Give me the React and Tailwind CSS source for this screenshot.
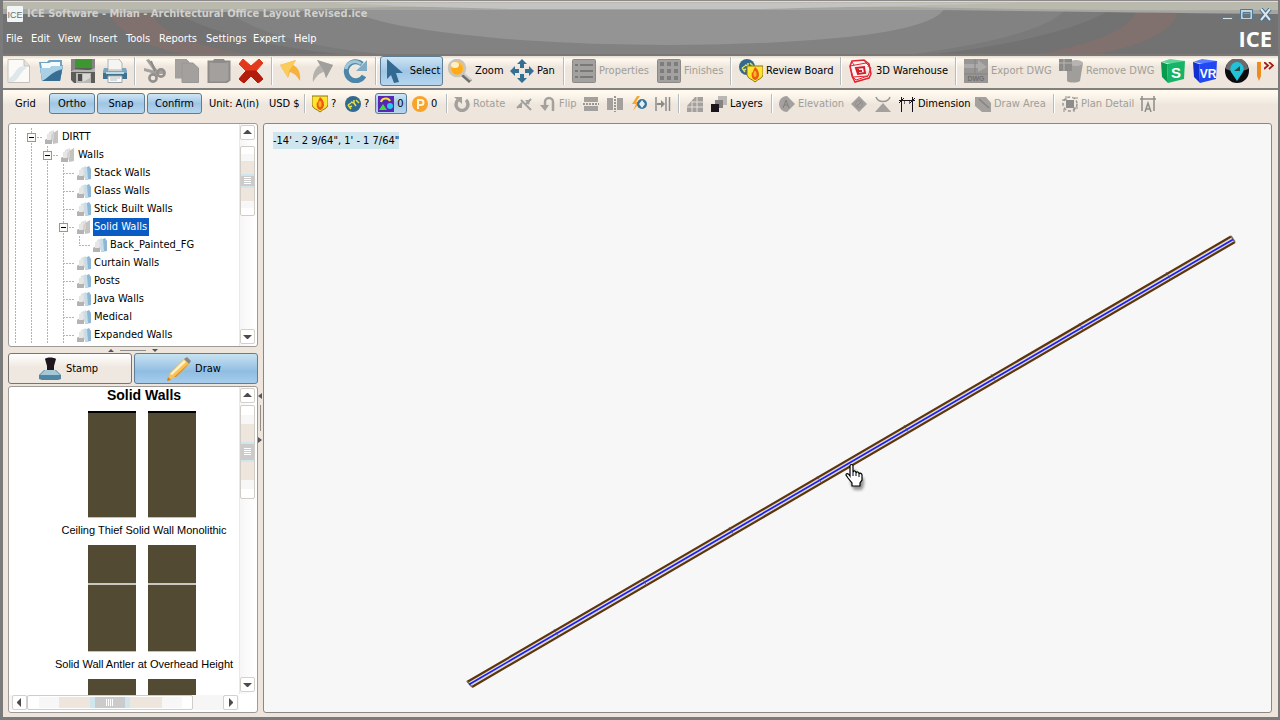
import React from "react";

const GRAY = "#a3a09d";

function Svg({ w = 24, h = 24, box, children }) {
  return (
    <svg width={w} height={h} viewBox={box || `0 0 ${w} ${h}`} className="block shrink-0" aria-hidden="true">
      {children}
    </svg>
  );
}

/* ---------- main toolbar icons (24px) ---------- */
const NewIcon = () => (
  <Svg>
    <path d="M1 .5H17L22.5 7V23.5H1Z" fill="#fbfaf7" stroke="#c5c1ba" />
    <path d="M17 .5V7H22.5" fill="#e5e2de" stroke="#c5c1ba" />
    <path d="M2 19C8 17 8 9 15 7L20 9C13 12 13 20 6 23H2Z" fill="#dfe7ea" />
  </Svg>
);
const OpenIcon = () => (
  <Svg>
    <path d="M0 3H8L10 1H23V6H24L21 22H3Z" fill="#6fa3c4" />
    <path d="M2 4H10L12 3H21V10H3Z" fill="#f4fbfd" />
    <path d="M1 8 3 22H21L24 7H13L11 9H1Z" fill="#5b92b8" />
    <path d="M1 8 3 22C8 21 10 14 23 10L24 7H13L11 9H1Z" fill="#a9d0e4" />
    <path d="M3 22H21L23 11C13 12 10 19 3 22Z" fill="#386e93" />
  </Svg>
);
const SaveIcon = () => (
  <Svg>
    <path d="M0 0H24V24H3L0 21Z" fill="#5c5c5a" />
    <path d="M0 0H4V11H0ZM21 0H24V11H21Z" fill="#848482" />
    <path d="M4 0H21V9H4Z" fill="#3d9631" />
    <path d="M0 12C7 8 15 14 24 9V13H0Z" fill="#b5b4b1" />
    <path d="M5 14H20V24H5Z" fill="#b9b8b5" />
    <path d="M7 15H11V22H7Z" fill="#4e4e4d" />
    <path d="M12 15H19V19L12 23Z" fill="#dad8d4" />
  </Svg>
);
const PrintIcon = () => (
  <Svg>
    <path d="M5 0H16L19 4V11H5Z" fill="#f5f5f3" stroke="#adb4b6" />
    <path d="M1 9H5V12H19V9H23L24 12V20H0V12Z" fill="#7ca6bf" />
    <path d="M0 14H24V20H0Z" fill="#40718f" />
    <path d="M3 13H21V15H3Z" fill="#c0dbe6" />
    <path d="M5 17H19V23.5H5Z" fill="#fbfaf7" stroke="#9aa6ac" />
    <path d="M7 19H17M7 21H14" stroke="#b7bdbd" />
  </Svg>
);
const CutIcon = () => (
  <Svg>
    <path d="M6 0 15 12 13 15 3 1ZM1 9 13 12 21 12 22 15 12 15 1 12Z" fill={GRAY} />
    <path d="M8 2C10 7 11 9 12 12" stroke="#8b8987" strokeWidth="2" fill="none" />
    <circle cx="18" cy="14" r="3.6" fill="none" stroke="#93908e" strokeWidth="2.6" />
    <circle cx="10" cy="19" r="3.6" fill="none" stroke="#93908e" strokeWidth="2.6" />
  </Svg>
);
const CopyIcon = () => (
  <Svg>
    <path d="M0 0H11L14 3V19H0Z" fill={GRAY} stroke="#a09e9c" />
    <path d="M7 4H18L23.500 9V23.500H7Z" fill={GRAY} stroke="#9a9896" />
  </Svg>
);
const PasteIcon = () => (
  <Svg>
    <path d="M1.500 2.500H22.500V21L19 23.500H1.500Z" fill={GRAY} stroke="#8e8c8a" strokeWidth="2" />
    <path d="M7 0H17L19 4H5Z" fill="#8e8c8a" />
  </Svg>
);
const DeleteIcon = () => (
  <Svg>
    <path d="M4 0 12 7 20 0 24 4 17 12 24 20 19 24 12 17 5 24 0 20 7 12 0 5Z" fill="#e2381b" stroke="#e2381b" />
    <path d="M7 12H17L24 20 19 24 12 17 5 24 0 20Z" fill="#b21c0c" stroke="#b21c0c" />
  </Svg>
);
const UndoIcon = () => (
  <Svg>
    <path d="M1 6 17 1 14 6C20 9 22 15 21 22C18 17 15 14 11 13L9 19Z" fill="#f6b23c" />
    <path d="M1 6 17 1 14 6 10 12 9 19Z" fill="#fbcb5c" />
  </Svg>
);
const RedoIcon = () => (
  <Svg>
    <path d="M22 6 6 1 9 6C4 9 1 16 2 23C5 18 8 14 13 13L15 19Z" fill="#b5b2ae" />
    <path d="M22 6 6 1 9 6 13 12 15 19Z" fill="#a19f9c" />
  </Svg>
);
const RefreshIcon = () => (
  <Svg>
    <path d="M19 5A9.500 9.500 0 1 0 21 17" fill="none" stroke="#4b86a8" strokeWidth="5" />
    <path d="M18 5A9 9 0 0 0 3 10" fill="none" stroke="#a3c6d8" strokeWidth="3" />
    <path d="M24 1V12H13Z" fill="#7fadc5" />
  </Svg>
);
const SelectIcon = () => (
  <Svg>
    <path d="M4 0 20 14H13L16 23 11 24 8 16 4 20Z" fill="#336a91" />
  </Svg>
);
const ZoomIcon = () => (
  <Svg>
    <path d="M15 14 24 21 21 24 13 17Z" fill="#6f706f" />
    <path d="M15 14 23 21" stroke="#c9c9c6" strokeWidth="2" />
    <circle cx="9" cy="9" r="8" fill="#f9bd45" stroke="#c8c5bd" strokeWidth="2.500" />
    <circle cx="9" cy="10" r="5.500" fill="#ffab18" />
    <ellipse cx="7" cy="6" rx="4" ry="3" fill="#fff0c4" />
  </Svg>
);
const PanIcon = () => (
  <Svg>
    <path d="M12 0 17 5H14V9H10V5H7ZM12 24 17 19H14V15H10V19H7ZM0 12 5 7V10H9V14H5V17ZM24 12 19 7V10H15V14H19V17Z" fill="#356f94" />
  </Svg>
);
const PropertiesIcon = () => (
  <Svg>
    <rect x=".5" y=".5" width="23" height="23" rx="1" fill="#a3a1a0" stroke="#8c8a88" />
    <path d="M3 6H6M3 12H6M3 18H6M8 6H21M8 12H21M8 18H21" stroke="#7b7978" strokeWidth="2" />
  </Svg>
);
const FinishesIcon = () => (
  <Svg>
    <rect x=".5" y=".5" width="23" height="23" rx="1" fill="#a3a1a0" stroke="#8c8a88" />
    <path d="M3 5H7M10 5H14M17 5H21M3 12H7M10 12H14M17 12H21M3 19H7M10 19H14M17 19H21" stroke="#7f7d7b" strokeWidth="4" />
  </Svg>
);
const Shield = () => (
  <>
    <path d="M0 1H16V10C15 14 11 14 8 17C5 14 1 14 0 10Z" fill="#ffe52b" stroke="#8a7520" />
    <path d="M8 2C11 4 12 7 12 10C12 13 9 15 8 15C5 14 4 11 5 7C6 9 6 5 8 2Z" fill="#ee5a16" />
    <ellipse cx="8" cy="9" rx="1.500" ry="3" fill="#ffb620" />
  </>
);
const Fyi = () => (
  <>
    <circle cx="8" cy="8" r="8" fill="#32698e" />
    <path d="M3 9 6 13M3 9 6 7M5 11 7 10M6 6 9 7 9 4M9 7 11 10M11 4 14 7" stroke="#e5df45" strokeWidth="1.500" fill="none" />
  </>
);
const ReviewIcon = () => (
  <Svg>
    <Fyi />
    <g transform="translate(8 6)"><Shield /></g>
  </Svg>
);
const WarehouseIcon = () => (
  <Svg>
    <path d="M2 5 16 2 22 10 15 13 19 21 7 23 1 15Z" fill="#fff4f3" />
    <path d="M3 2 15 1 20 5 22 15 20 19 6 23 3 17 1 7Z" fill="none" stroke="#e22530" strokeWidth="1.500" />
    <path d="M1 7 17 4 22 9 19 17 4 18ZM3 3 5 6M15 1 17 4M20 5 19 8M4 18 7 21 19 17" fill="none" stroke="#e22530" />
    <path d="M7 9 15 8 16 14 9 15ZM9 12H13M9 8V16" stroke="#d51e29" strokeWidth="2" fill="none" />
  </Svg>
);
const ExportIcon = () => (
  <Svg>
    <rect width="24" height="24" fill="#989694" />
    <path d="M0 5H14V1L23 8 14 13V9H0Z" fill="#adaba9" />
    <path d="M11 0V15M0 15H24" stroke="#858381" />
    <text x="12" y="22" textAnchor="middle" fontSize="7" fontWeight="700" fontFamily="Liberation Sans, sans-serif" fill="#72706e">DWG</text>
  </Svg>
);
const RemoveIcon = () => (
  <Svg>
    <path d="M8 4H24L21 22C18 24 10 24 8 22Z" fill="#a09e9b" />
    <ellipse cx="17" cy="4" rx="7" ry="3" fill="#b6b4b1" />
    <path d="M0 0H13V12H0Z" fill="#8d8b89" />
    <path d="M0 4H13M5 0V12" stroke="#b9b6b2" />
  </Svg>
);
const Cube = ({ label, top, left, front, size }) => (
  <Svg>
    <path d="M0 3 9 0 24 2 17 6Z" fill={top} />
    <path d="M0 3 6 5 7 24 1 18Z" fill={left} />
    <path d="M6 5 24 2 23 20 7 24Z" fill={front} />
    <text x="15" y="19" textAnchor="middle" fontSize={size} fontWeight="700" fontFamily="Liberation Sans, sans-serif" fill="#fff">{label}</text>
  </Svg>
);
const PinIcon = () => (
  <Svg>
    <circle cx="12" cy="12" r="12" fill="#0c0c0e" />
    <path d="M1 10A11 11 0 0 1 23 10C17 13 7 13 1 10Z" fill="#6b6b6e" />
    <path d="M12 3A7 7 0 0 1 18 13L12 22 6 13A7 7 0 0 1 12 3Z" fill="#20c4d8" />
    <path d="M15 7V12H9Z" fill="#31474c" />
  </Svg>
);
const PencilEdgeIcon = () => (
  <Svg w={4} h={20}>
    <path d="M0 1H4V15L2 20 0 15Z" fill="#ef8a1c" />
  </Svg>
);

/* ---------- second toolbar icons (16px) ---------- */
const S = ({ children, h = 16 }) => <Svg w={16} h={h}>{children}</Svg>;
const ShieldIcon = () => <S h={18}><Shield /></S>;
const FyiIcon = () => <S><Fyi /></S>;
const ShapesIcon = () => (
  <S>
    <rect width="16" height="16" fill="#5c24b4" />
    <path d="M3 6C4 2 10 1 12 5" stroke="#efe43c" strokeWidth="2" fill="none" />
    <path d="M1 14 5 8 9 14Z" fill="#35e338" />
    <circle cx="12" cy="10" r="3" fill="#28c7ee" />
  </S>
);
const CoinIcon = () => (
  <S>
    <circle cx="8" cy="8" r="8" fill="#f8a32c" />
    <path d="M6 13V4H9A2.500 2.500 0 0 1 9 9H6" stroke="#fff4d8" strokeWidth="2" fill="none" />
  </S>
);
const RotateIcon = () => (
  <S>
    <path d="M4 4A6 6 0 1 0 12 4" stroke={GRAY} strokeWidth="3.500" fill="none" />
    <path d="M0 1H8V8Z" fill={GRAY} />
  </S>
);
const MirrorIcon = () => (
  <S>
    <path d="M5 4 15 14M1 12 6 7M9 9 15 3" stroke={GRAY} strokeWidth="2" />
    <path d="M6 6V12H1ZM9 4H14L13 9Z" fill={GRAY} />
  </S>
);
const FlipIcon = () => (
  <S>
    <path d="M5 12V6A4 4 0 0 1 13 6V15" stroke={GRAY} strokeWidth="2.500" fill="none" />
    <path d="M0 9H9L5 15Z" fill={GRAY} />
  </S>
);
const SplitHIcon = () => (
  <S>
    <path d="M1 1H15V6H1ZM1 10H15V15H1Z" fill={GRAY} />
    <path d="M0 8H16" stroke="#7d7b79" strokeWidth="1.500" strokeDasharray="2 1" />
  </S>
);
const SplitVIcon = () => (
  <S>
    <path d="M0 2H6V14H0ZM10 2H16V14H10Z" fill={GRAY} />
    <path d="M8 0V16" stroke="#7d7b79" strokeWidth="1.500" strokeDasharray="2 1" />
  </S>
);
const BoltIcon = () => (
  <S>
    <path d="M6 0 1 8H5L2 15 9 6H5L9 0Z" fill="#f9a52c" />
    <circle cx="11" cy="8" r="5" fill="#36749b" />
    <path d="M11 4 14 8 11 12 8 8Z" fill="#e2eff3" />
  </S>
);
const AlignIcon = () => (
  <S>
    <path d="M1 1V15M11 1V15M14.500 1V15" stroke="#8e8c8a" strokeWidth="1.500" />
    <path d="M2 7H6V4L10 8 6 12V9H2Z" fill="#8e8c8a" />
  </S>
);
const GridIcon = () => (
  <S>
    <path d="M0 10 8 1H16V16H0Z" fill={GRAY} />
    <path d="M0 11H16M5 5V16M10 1V16M5 6H16" stroke="#e7dfd6" />
  </S>
);
const LayersIcon = () => (
  <S>
    <rect x="7" y="0" width="9" height="9" fill="#bab8b5" />
    <rect x="4" y="4" width="8" height="8" fill="#858381" />
    <rect x="0" y="8" width="8" height="8" fill="#1c141b" />
  </S>
);
const ElevationIcon = () => (
  <S>
    <path d="M8 0 16 8 8 16A8 8 0 0 1 8 0Z" fill={GRAY} />
    <path d="M4 12 7 4 10 12M5 9H9" stroke="#817f7d" fill="none" />
  </S>
);
const DiamondIcon = () => (
  <S>
    <path d="M8 0 16 8 8 16 0 8Z" fill={GRAY} />
    <path d="M6 10 10 6" fill="none" stroke="#868482" />
    <circle cx="8" cy="8" r="3.500" fill="none" stroke="#939190" />
  </S>
);
const SectionIcon = () => (
  <S>
    <path d="M1 1C3 7 13 7 15 1" fill="none" stroke="#999795" strokeWidth="1.500" />
    <path d="M8 7 16 16H0Z" fill={GRAY} />
  </S>
);
const DimensionIcon = () => (
  <S>
    <path d="M2.500 1V16M13.500 1V16M0 4.500H16" stroke="#18121a" fill="none" />
    <path d="M0 7 5 2M11 7 16 2" stroke="#18121a" />
    <path d="M5.500 5V8M10.500 5V8" stroke="#6d6868" />
  </S>
);
const DrawAreaIcon = () => (
  <S>
    <path d="M0 1H11L16 7V16H7L0 10Z" fill={GRAY} />
    <path d="M4 3 14 12" stroke="#858381" strokeWidth="1.500" />
  </S>
);
const PlanIcon = () => (
  <S>
    <rect x="4" y="4" width="8" height="8" fill="#8e8c8a" />
    <circle cx="8" cy="8" r="7" fill="none" stroke="#9a9896" strokeWidth="1.500" strokeDasharray="3 2" />
    <path d="M4 0V4H0M12 16V12H16M12 2H16M2 13V16" stroke="#8e8c8a" fill="none" />
  </S>
);
const TextDimIcon = () => (
  <S>
    <path d="M2 0V15M14 0V15M0 3H16M5 16 8 7 11 16M6 13H10" stroke="#8e8c8a" strokeWidth="1.500" fill="none" />
  </S>
);

/* ---------- toolbar parts ---------- */
function Tool({ icon, label, name, width, disabled, onOff }) {
  const tone = disabled ? "text-[#a09f98]" : "text-black";
  if (onOff) {
    return (
      <button
        aria-pressed="true"
        aria-label={name}
        className={`flex h-full shrink-0 items-center justify-center gap-[3px] rounded-[3px] border border-[#5d7d97] bg-linear-to-b from-[#cfe6f3] via-[#9fc6e6] to-[#b5d6ee] whitespace-nowrap text-black ${width}`}
      >
        {icon}
        {label}
      </button>
    );
  }
  return (
    <button disabled={disabled} aria-label={name} className={`flex h-full shrink-0 items-center gap-[3px] whitespace-nowrap ${tone} ${width}`}>
      {icon}
      {label}
    </button>
  );
}
const Sep = ({ width }) => (
  <div className={`h-full shrink-0 py-px ${width}`}>
    <div className="h-full w-0.5 border-l border-r border-l-[#b4bcc0] border-r-white" />
  </div>
);

const folder = (open) => (
  <Svg w={16} h={16}>
    <path d="M5 3 10 1V13H4Z" fill="#dfe1e1" />
    <path d={open ? "M9 4 14 1V14L9 15Z" : "M9 3 13 1 15 4V14L9 15Z"} fill={open ? "#c4c3c1" : "#8fb6d2"} />
    <path d={open ? "M7 6 10 4V10L7 12Z" : "M8 3 11 2 12 14 9 15Z"} fill={open ? "#d2d2d0" : "#c5dcea"} />
    <path d="M1 11C3 9 6 9 8 11V15H1Z" fill="#b4b3b1" />
    <path d="M3 5 7 4V11H3Z" fill="#e6e6e4" />
  </Svg>
);

const TREE = [
  { t: "DIRTT", d: 1, open: true },
  { t: "Walls", d: 2, open: true },
  { t: "Stack Walls", d: 3 },
  { t: "Glass Walls", d: 3 },
  { t: "Stick Built Walls", d: 3 },
  { t: "Solid Walls", d: 3, open: true, sel: true },
  { t: "Back_Painted_FG", d: 4, last: true },
  { t: "Curtain Walls", d: 3 },
  { t: "Posts", d: 3 },
  { t: "Java Walls", d: 3 },
  { t: "Medical", d: 3 },
  { t: "Expanded Walls", d: 3 },
];

function TreeRow({ t, d, open, sel, last }) {
  const nx = 6 + 16 * d;
  const guides = Array.from({ length: d + 1 }, (_, i) => 6 + 16 * i);
  return (
    <li role="treeitem" aria-expanded={open ? true : undefined} aria-selected={!!sel} className="flex h-[18px] items-center">
      <Svg w={nx + 13} h={18}>
        {guides.map((x, i) => (
          <path key={x} d={`M${x + 0.5} 0V${last && i === d ? 9 : 18}`} stroke="#b3b3b3" strokeDasharray="2 1" />
        ))}
        <path d={`M${nx} 9.500H${nx + 12}`} stroke="#b3b3b3" strokeDasharray="2 1" />
        {open && (
          <>
            <rect x={nx - 3.5} y="5.500" width="8" height="8" fill="#fbfaf7" stroke="#9a9792" />
            <path d={`M${nx - 2} 9.500H${nx + 3}`} stroke="#000" />
          </>
        )}
      </Svg>
      {folder(open)}
      <button className={`ml-px h-[18px] pr-0.5 pl-px whitespace-nowrap ${sel ? "bg-[#0a5cc4] text-white" : "text-black"}`}>{t}</button>
    </li>
  );
}

const ARROWS = { up: "M0 5 4 1H5L9 5Z", down: "M0 2 4 6H5L9 2Z", left: "M6 0 2 4V5L6 9Z", right: "M3 0 7 4V5L3 9Z" };
const Arrow = ({ dir }) => (
  <Svg w={9} h={dir === "up" || dir === "down" ? 7 : 9}>
    <path d={ARROWS[dir]} fill="#4c4c4c" />
  </Svg>
);
const ArrowButton = ({ dir }) => (
  <button aria-label={`Scroll ${dir}`} className="flex size-[15px] shrink-0 items-center justify-center rounded-[2px] border border-[#d4d0cb] bg-white">
    <Arrow dir={dir} />
  </button>
);

function VScroll({ thumb, gap }) {
  return (
    <div className="flex w-4 shrink-0 flex-col border-l border-[#efe8e0] bg-linear-to-r from-[#f6f6f6] to-white pt-px pb-0.5">
      <ArrowButton dir="up" />
      <div className={`flex w-[15px] shrink-0 flex-col items-stretch justify-center rounded-[2px] border border-[#d0ccc7] bg-white ${gap} ${thumb}`}>
        <div className="h-[10%] bg-[#f7f7f7]" />
        <div className="h-[19%] bg-[#eee6dd]" />
        <div className="flex h-[22%] flex-col items-center justify-center gap-px border-y-2 border-[#cfe6ee] bg-[#cbcbcb]">
          <i className="h-px w-[7px] bg-white" />
          <i className="h-px w-[7px] bg-white" />
          <i className="h-px w-[7px] bg-white" />
          <i className="h-px w-[7px] bg-white" />
        </div>
        <div className="h-[19%] bg-[#eee6dd]" />
        <div className="h-[10%] bg-[#f7f7f7]" />
      </div>
      <div className="flex-1" />
      <ArrowButton dir="down" />
    </div>
  );
}

const Wall = ({ split, cap }) => (
  <svg width="48" height="107" viewBox="0 0 48 107" className="block" aria-hidden="true">
    <rect width="48" height="106" fill="#524a32" />
    {cap && <rect width="48" height="2" fill="#000" />}
    {split && <rect y="38" width="48" height="2" fill="#c9c7c2" />}
    <rect y="106" width="48" height="1" fill="#c3c1bc" />
  </svg>
);
const WallItem = ({ label, split, cap }) => (
  <button className="flex h-[134px] shrink-0 flex-col items-center">
    <span className="flex gap-3 pr-1">
      <Wall split={split} cap={cap} />
      <Wall split={split} cap={cap} />
    </span>
    <span className="pt-1 text-[11px] leading-4 whitespace-nowrap">{label}</span>
  </button>
);

const JOINTS = [[1168, 276], [1081, 327], [993, 378], [906, 429], [819, 480], [731, 531], [644, 582], [556, 633]];

function Drawing() {
  return (
    <svg className="block h-full w-full" role="img" aria-label="Wall plan">
      <defs>
        <filter id="soft" x="-50%" y="-50%" width="200%" height="200%">
          <feGaussianBlur stdDeviation="1.5" />
        </filter>
      </defs>
      <g transform="translate(-264 -124)">
        <path d="M467 682 1231 237 1235 242 471 687Z" fill="#dadadd" />
        <path d="M467 682 1231 236.500M472 687 1235 242" stroke="#5e3509" strokeWidth="2.200" />
        <path d="M467 681 472 687M1231 236 1235 242" stroke="#77706a" strokeWidth="1.500" />
        <path d="M469 684.500 1233 239.500" stroke="#1d1df2" strokeWidth="1.700" />
        {JOINTS.map(([x, y]) => (
          <path key={x} d={`M${x - 2} ${y - 4} ${x + 3} ${y + 4}`} stroke="#5a4b60" strokeOpacity=".7" />
        ))}
        <g transform="translate(846 464)">
          <path d="M7 6H10V13L18 14V21L16 26H8L4 18Z" fill="#000" opacity=".4" filter="url(#soft)" />
          <path d="M4 2C4 0 7 0 7 2V8C8 6 10 7 10 9C11 7 13 8 13 10C14 8 16 10 16 11V16L14 19V22H6V19L2 14L0 11C0 9 2 9 4 12Z" fill="#fff" stroke="#000" strokeWidth="1.200" />
          <path d="M7 8V12M10 9V12M13 10V13" stroke="#000" />
        </g>
      </g>
    </svg>
  );
}

const MENU = ["File", "Edit", "View", "Insert", "Tools", "Reports", "Settings", "Expert", "Help"];
const MENU_W = ["w-[25px]", "w-[27px]", "w-[31px]", "w-[37px]", "w-[33px]", "w-[47px]", "w-[47px]", "w-[41px]", "w-[30px]"];

export default function App() {
  return (
    <div className="flex h-screen w-full flex-col overflow-hidden border-r-2 border-b-[3px] border-l-[3px] border-[#7b7b7b] bg-[#eee6dd] font-['Tahoma','DejaVu_Sans_Condensed','Noto_Sans',sans-serif] text-[11px] leading-4 text-black">
      <header className="relative -mr-0.5 -ml-[3px] h-14 shrink-0 bg-[#727272]">
        <svg className="absolute inset-0 h-full w-full" viewBox="0 0 1280 56" preserveAspectRatio="none" aria-hidden="true">
          <path d="M170 10H1110Q1060 40 920 56H360Q230 45 170 10Z" fill="#7a7a7a" />
          <path d="M225 10H1065Q1040 38 900 56H400Q270 45 225 10Z" fill="#828282" />
          <path d="M350 8H945Q930 36 760 43Q640 48 520 40Q370 28 350 8Z" fill="#949494" />
          <path d="M108 12H152Q160 40 246 54H182Q120 40 108 12Z" fill="#80706e" />
          <path d="M1136 12H1178Q1170 40 1098 54H1038Q1125 38 1136 12Z" fill="#80706e" />
          <path d="M0 0H1280V14Q1180 13 940 10H350Q160 13 0 14Z" fill="#a5a5a1" />
          <path d="M0 0H1280V10Q1100 11 900 7H400Q200 11 0 9Z" fill="#bab9ae" />
          <path d="M330 3H1020Q850 7 760 9H510Q420 7 330 3Z" fill="#c4c3c4" />
          <rect width="1280" height="1" fill="#8d898a" />
          <rect y="1" width="1280" height="1" fill="#dedbd7" />
          <rect y="54" width="1280" height="2" fill="#7b7876" />
        </svg>
        <div className="relative flex h-full flex-col">
          <div className="flex h-7 items-center pr-2 pl-[7px]">
            <Svg w={16} h={16}>
              <rect width="16" height="16" rx="1" fill="#f2f5f5" />
              <text x="8" y="12" textAnchor="middle" fontSize="9" fontFamily="Liberation Sans, sans-serif" fill="#5f7278">ICE</text>
            </Svg>
            <h1 className="flex-1 pl-1 font-bold whitespace-nowrap text-[#d0d0cc]">ICE Software - Milan - Architectural Office Layout Revised.ice</h1>
            <div className="flex gap-1.5">
              <button aria-label="Minimize">
                <Svg w={13} h={13}><rect x="1.500" y="9.500" width="10" height="2" fill="#d8e4ec" stroke="#54809f" /></Svg>
              </button>
              <button aria-label="Maximize">
                <Svg w={13} h={13}><path d="M.5 1.500H12.500V11.500H.5ZM3 4.500V9.500H10V4.500Z" fillRule="evenodd" fill="#c3d3de" stroke="#4b799a" /></Svg>
              </button>
              <button aria-label="Close">
                <Svg w={13} h={13}>
                  <path d="M2 1 11 12M11 1 2 12" stroke="#416f91" strokeWidth="4" />
                  <path d="M2 1 11 12M11 1 2 12" stroke="#dce7ed" strokeWidth="2" />
                </Svg>
              </button>
            </div>
          </div>
          <div className="flex h-[22px] items-center justify-between pr-2 pl-1.5 text-white">
            <nav className="flex">
              {MENU.map((m, i) => (
                <button key={m} className={`text-left whitespace-nowrap ${MENU_W[i]}`}>{m}</button>
              ))}
            </nav>
            <span className="pb-0.5 font-['Open_Sans',sans-serif] text-[22px] leading-5 font-bold">ICE</span>
          </div>
        </div>
      </header>

      <div role="toolbar" aria-label="Main" className="flex h-[34px] shrink-0 items-center overflow-hidden border-b-2 border-[#82807f] bg-linear-to-b from-[#e4ddd4] from-0% via-[#fff9ee] via-10% to-[#eee6dd] to-35% pb-0.5 pl-1">
        <div className="flex h-[30px] items-center">
          <Tool name="New" icon={<NewIcon />} width="w-8" />
          <Tool name="Open" icon={<OpenIcon />} width="w-8" />
          <Tool name="Save" icon={<SaveIcon />} width="w-8" />
          <Tool name="Print" icon={<PrintIcon />} width="w-[31px]" />
          <Sep width="w-[9px]" />
          <Tool name="Cut" icon={<CutIcon />} width="w-8" disabled />
          <Tool name="Copy" icon={<CopyIcon />} width="w-8" disabled />
          <Tool name="Paste" icon={<PasteIcon />} width="w-8" disabled />
          <Tool name="Delete" icon={<DeleteIcon />} width="w-8" />
          <Sep width="w-2" />
          <Tool name="Undo" icon={<UndoIcon />} width="w-8" />
          <Tool name="Redo" icon={<RedoIcon />} width="w-8" disabled />
          <Tool name="Refresh" icon={<RefreshIcon />} width="w-8" />
          <Sep width="w-[5px]" />
          <Tool label="Select" icon={<SelectIcon />} width="w-[63px]" onOff />
          <div className="w-[5px]" />
          <Tool label="Zoom" icon={<ZoomIcon />} width="w-[62px]" />
          <Tool label="Pan" icon={<PanIcon />} width="w-[53px]" />
          <Sep width="w-[9px]" />
          <Tool label="Properties" icon={<PropertiesIcon />} width="w-[85px]" disabled />
          <Tool label="Finishes" icon={<FinishesIcon />} width="w-[73px]" disabled />
          <Sep width="w-[9px]" />
          <Tool label="Review Board" icon={<ReviewIcon />} width="w-[101px]" />
          <Sep width="w-[9px]" />
          <Tool label="3D Warehouse" icon={<WarehouseIcon />} width="w-[106px]" />
          <Sep width="w-[9px]" />
          <Tool label="Export DWG" icon={<ExportIcon />} width="w-[95px]" disabled />
          <Tool label="Remove DWG" icon={<RemoveIcon />} width="w-[102px]" disabled />
          <Tool name="S module" icon={<Cube label="S" size={15} top="#5ed39a" left="#0a9a4e" front="#17b468" />} width="w-8" />
          <Tool name="VR module" icon={<Cube label="VR" size={12} top="#5a7cff" left="#1130cf" front="#2248f2" />} width="w-8" />
          <Tool name="Location" icon={<PinIcon />} width="w-8" />
          <Tool name="Edit" icon={<PencilEdgeIcon />} width="w-[7px]" />
          <button aria-label="More tools" className="self-start pt-1.5">
            <Svg w={10} h={8}><path d="M0 0 4 3.500 0 7M5 0 9 3.500 5 7" stroke="#a31b12" strokeWidth="1.800" fill="none" /></Svg>
          </button>
        </div>
      </div>

      <div role="toolbar" aria-label="Drawing" className="flex h-[30px] shrink-0 items-center overflow-hidden bg-linear-to-b from-[#fff9ee] from-10% to-[#eee6dd] to-50% pb-[3px] pl-3">
        <div className="flex h-[21px] items-center">
          <Tool label="Grid" width="w-[34px]" />
          <Tool label="Ortho" width="w-[46px]" onOff />
          <div className="w-0.5" />
          <Tool label="Snap" width="w-12" onOff />
          <div className="w-0.5" />
          <Tool label="Confirm" width="w-[55px]" onOff />
          <div className="w-[7px]" />
          <Tool label="Unit: A(in)" width="w-[60px]" />
          <Tool label="USD $" width="w-[35px]" />
          <Sep width="w-2" />
          <Tool label="?" icon={<ShieldIcon />} width="w-[33px]" />
          <Tool label="?" icon={<FyiIcon />} width="w-[30px]" />
          <Tool label="0" icon={<ShapesIcon />} width="w-8" onOff />
          <div className="w-[5px]" />
          <Tool label="0" icon={<CoinIcon />} width="w-[34px]" />
          <Sep width="w-2" />
          <Tool label="Rotate" icon={<RotateIcon />} width="w-[62px]" disabled />
          <Tool name="Mirror" icon={<MirrorIcon />} width="w-6" disabled />
          <Tool label="Flip" icon={<FlipIcon />} width="w-[43px]" disabled />
          <Tool name="Split horizontally" icon={<SplitHIcon />} width="w-6" disabled />
          <Tool name="Split vertically" icon={<SplitVIcon />} width="w-6" disabled />
          <Tool name="Power" icon={<BoltIcon />} width="w-6" />
          <Tool name="Align" icon={<AlignIcon />} width="w-[23px]" disabled />
          <Sep width="w-[9px]" />
          <Tool name="Tiles" icon={<GridIcon />} width="w-6" disabled />
          <Tool label="Layers" icon={<LayersIcon />} width="w-[60px]" />
          <Sep width="w-2" />
          <Tool label="Elevation" icon={<ElevationIcon />} width="w-[72px]" disabled />
          <Tool name="Detail marker" icon={<DiamondIcon />} width="w-6" disabled />
          <Tool name="Section" icon={<SectionIcon />} width="w-6" disabled />
          <Tool label="Dimension" icon={<DimensionIcon />} width="w-[76px]" />
          <Tool label="Draw Area" icon={<DrawAreaIcon />} width="w-[78px]" disabled />
          <Sep width="w-[9px]" />
          <Tool label="Plan Detail" icon={<PlanIcon />} width="w-[78px]" disabled />
          <Tool name="Text dimension" icon={<TextDimIcon />} width="w-4" disabled />
        </div>
      </div>

      <div className="flex min-h-0 flex-1 gap-[5px] pt-[3px] pr-1.5 pb-1 pl-[5px]">
        <aside className="flex w-[250px] shrink-0 flex-col">
          <div className="flex h-56 shrink-0 rounded-[3px] border border-[#9d9a97] bg-white pr-0.5">
            <ul role="tree" aria-label="Catalog" className="flex-1 overflow-hidden pt-1">
              {TREE.map((r) => <TreeRow key={r.t} {...r} />)}
            </ul>
            <VScroll thumb="h-[70px]" gap="mt-1.5" />
          </div>
          <div className="flex h-1.5 shrink-0 items-center justify-center gap-1.5">
            <Svg w={6} h={3}><path d="M0 3 3 0 6 3Z" fill="#555" /></Svg>
            <div className="h-px w-[26px] bg-[#8f8c89]" />
            <Svg w={6} h={3}><path d="M0 0 3 3 6 0Z" fill="#555" /></Svg>
          </div>
          <div className="grid h-[31px] shrink-0 grid-cols-2 gap-0.5">
            <button className="flex items-center justify-center gap-1 rounded-[3px] border border-[#777472] bg-linear-to-b from-white via-[#efe8e0] via-45% to-[#efe8e0] pr-1">
              <Svg>
                <path d="M7 2C8 0 16 0 18 2L16 9V14H9V9Z" fill="#20161d" />
                <path d="M6 13H18L23 18V22L20 23H4L1 22V18Z" fill="#4f86a2" />
                <path d="M7 13H17L22 18H2Z" fill="#a4c8d5" />
              </Svg>
              <span>Stamp</span>
            </button>
            <button aria-pressed="true" className="flex items-center justify-center gap-1 rounded-[3px] border border-[#5f7d95] bg-linear-to-b from-[#c9e3f0] via-[#8fbde2] via-60% to-[#a8cdec] pr-1">
              <Svg>
                <path d="M0 24 3 16 17 2 22 7 8 20Z" fill="#fcc24f" />
                <path d="M3 17 17 3 19 5 5 18Z" fill="#fff0c6" />
                <path d="M7 20 20 8 22 7 9 20Z" fill="#e58a16" />
                <path d="M17 2 20 0 24 4 22 7Z" fill="#8b8583" />
                <path d="M0 24 1 20 4 23Z" fill="#e07a17" />
              </Svg>
              <span>Draw</span>
            </button>
          </div>
          <div className="mt-0.5 flex min-h-0 flex-1 rounded-[3px] border border-[#9d9a97] bg-white pr-0.5 pb-0.5">
            <div className="flex min-w-0 flex-1 flex-col">
              <div className="flex min-h-0 flex-1 flex-col overflow-hidden pl-10 font-['Liberation_Sans',Arial,sans-serif]">
                <h2 className="shrink-0 pb-2 text-center text-[14px] leading-4 font-bold">Solid Walls</h2>
                <WallItem label="Ceiling Thief Solid Wall Monolithic" cap />
                <WallItem label="Solid Wall Antler at Overhead Height" split />
                <WallItem label="" />
              </div>
              <div className="flex shrink-0 items-stretch bg-[#f6f6f6] pr-px pl-[3px]">
                <ArrowButton dir="left" />
                <div className="flex w-[166px] items-stretch justify-center rounded-[2px] border border-[#d0ccc7] bg-white py-px">
                  <div className="w-5 bg-[#f7f7f7]" />
                  <div className="w-[31px] bg-[#eee6dd]" />
                  <div className="flex w-10 items-center justify-center gap-px border-x-[5px] border-[#cfe6ee] bg-[#cbcbcb]">
                    <i className="h-[7px] w-px bg-white" />
                    <i className="h-[7px] w-px bg-white" />
                    <i className="h-[7px] w-px bg-white" />
                    <i className="h-[7px] w-px bg-white" />
                  </div>
                  <div className="w-8 bg-[#eee6dd]" />
                  <div className="w-5 bg-[#f7f7f7]" />
                </div>
                <div className="flex-1" />
                <ArrowButton dir="right" />
              </div>
            </div>
            <div className="flex pb-4">
              <VScroll thumb="h-[94px]" gap="mt-0.5" />
            </div>
          </div>
        </aside>

        <main className="relative min-w-0 flex-1 rounded-[3px] border border-[#8a8886] bg-[#f7f7f7]">
          <Drawing />
          <output className="absolute top-2 left-[9px] h-[17px] bg-[#cfe6ee] leading-[18px] whitespace-nowrap">-14' - 2 9/64", 1' - 1 7/64"</output>
          <div className="absolute top-[269px] -left-1.5 flex w-1 flex-col items-center gap-1.5">
            <Svg w={4} h={6}><path d="M4 0 0 3 4 6Z" fill="#555" /></Svg>
            <div className="h-[26px] w-px bg-[#8f8c89]" />
            <Svg w={4} h={6}><path d="M0 0 4 3 0 6Z" fill="#555" /></Svg>
          </div>
        </main>
      </div>
    </div>
  );
}
